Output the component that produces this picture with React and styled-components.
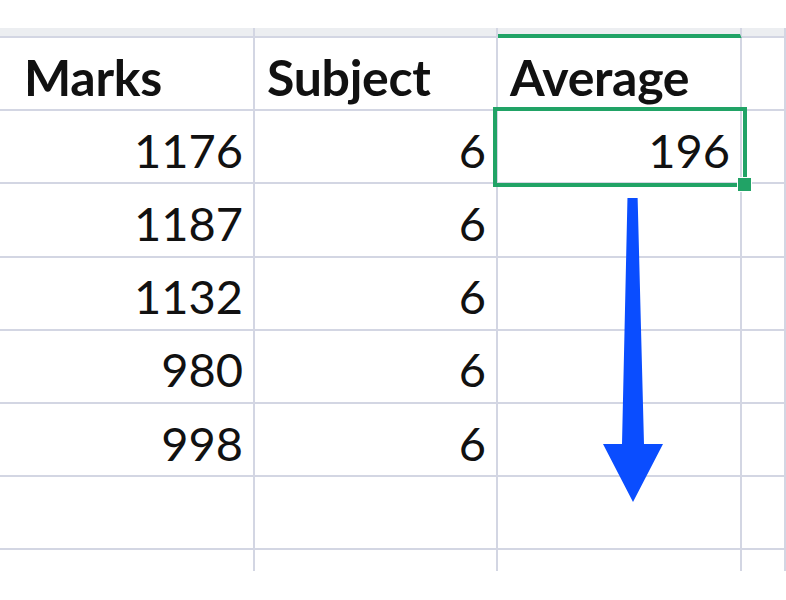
import React from "react";
import styled, { createGlobalStyle } from "styled-components";

const Global = createGlobalStyle`
  html, body { margin: 0; background: #fff; }
  body { font-family: "Lato", "Liberation Sans", sans-serif; }
`;

const Sheet = styled.div`
  position: relative;
  margin-top: 28px;
  display: grid;
  grid-template-columns: 12px 243px 243px 244px 1fr;
  grid-template-rows: 10px repeat(7, 73.2px) 21px;
  width: 786px;
`;

const Cell = styled.div`
  position: relative;
  box-sizing: border-box;
  border-right: 2px solid #d3d6e3;
  border-bottom: ${(p) => (p.$last ? "none" : "2px solid #d3d6e3")};
  background: ${(p) => (p.$band ? "#eceef1" : "#fff")};
  ${(p) => p.$accent && "border-bottom: 5px solid #21a366;"}
  ${(p) => p.$selected && "z-index: 2;"}
  display: flex;
  align-items: center;
  justify-content: ${(p) => (p.$right ? "flex-end" : "flex-start")};
  padding: ${(p) => (p.$right ? "6px 10px 0 0" : "6px 0 0 12px")};
  font-size: ${(p) => (p.$bold ? "50px" : "47px")};
  font-weight: ${(p) => (p.$bold ? 700 : 400)};
  color: #111;
  letter-spacing: ${(p) => (p.$bold ? "-0.3px" : "0")};
`;

const Selection = styled.div`
  position: absolute;
  left: -5px;
  top: -4px;
  right: -7px;
  bottom: -5px;
  border: 4px solid #21a366;
  pointer-events: none;
`;

const Handle = styled.div`
  position: absolute;
  right: -9px;
  bottom: -9px;
  width: 13px;
  height: 13px;
  background: #21a366;
  border: 1px solid #fff;
`;

const Arrow = styled.svg`
  position: absolute;
  left: 600px;
  top: 170px;
  z-index: 3;
`;

const headers = ["Marks", "Subject", "Average"];
const rows = [
  ["1176", "6", "196"],
  ["1187", "6", ""],
  ["1132", "6", ""],
  ["980", "6", ""],
  ["998", "6", ""],
  ["", "", ""],
];

export default function App() {
  return (
    <>
      <Global />
      <Sheet>
        {[0, 1, 2, 3, 4].map((c) => (
          <Cell key={"b" + c} $band $accent={c === 3} />
        ))}
        <Cell />
        {headers.map((h) => (
          <Cell key={h} $bold>{h}</Cell>
        ))}
        <Cell />
        {rows.map((r, i) => (
          <React.Fragment key={i}>
            <Cell />
            {r.map((v, j) => {
              const sel = i === 0 && j === 2;
              return (
                <Cell key={j} $right $selected={sel}>
                  {v}
                  {sel && (
                    <Selection>
                      <Handle />
                    </Selection>
                  )}
                </Cell>
              );
            })}
            <Cell />
          </React.Fragment>
        ))}
        {[0, 1, 2, 3, 4].map((c) => (
          <Cell key={"e" + c} $last />
        ))}
        <Arrow width="66" height="306" viewBox="0 0 66 306">
          <path d="M28 4 L37 4 L44 274 L63 274 L33 332 L3 274 L22 274 Z" fill="#0a4dff" transform="translate(0,-28)" />
        </Arrow>
      </Sheet>
    </>
  );
}
